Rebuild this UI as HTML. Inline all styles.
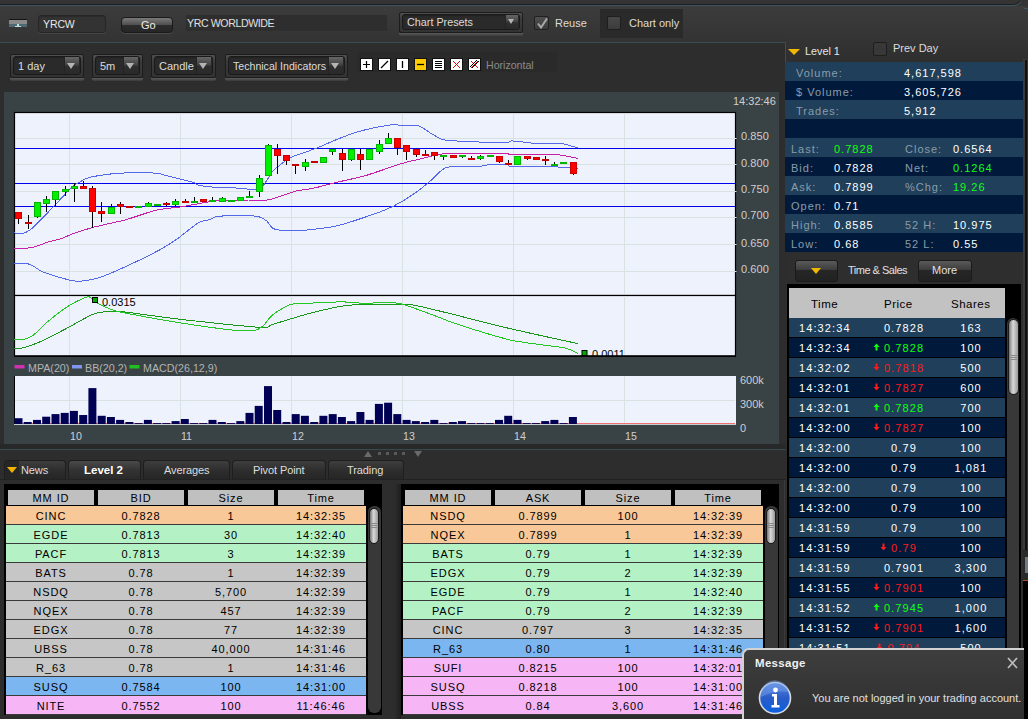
<!DOCTYPE html><html><head><meta charset="utf-8"><style>
*{margin:0;padding:0;box-sizing:border-box}
html,body{width:1028px;height:719px;overflow:hidden;background:#2d2d2d;font-family:"Liberation Sans",sans-serif;font-size:11px;color:#ddd}
.a{position:absolute}
.t{position:absolute;white-space:nowrap;line-height:1}
</style></head><body>
<div class="a" style="left:0;top:0;width:1028px;height:6px;background:#343434"></div>
<div class="a" style="left:0;top:6px;width:786px;height:36px;background:linear-gradient(#3c3c3c,#333333)"></div>
<div class="a" style="left:786px;top:6px;width:242px;height:56px;background:linear-gradient(#3c3c3c,#343434 60%,#2e2e2e)"></div>
<svg class="a" style="left:0;top:0" width="1028" height="12"><path d="M0 4.5H1013Q1017 4.5 1020 1" fill="none" stroke="#1e1e1e" stroke-width="1"/><path d="M0 5.5H1014Q1018 5.5 1021 2" fill="none" stroke="#3d5560" stroke-width="1"/><path d="M1024 8.5H1028" stroke="#3d5560" stroke-width="1"/></svg>
<div class="a" style="left:0;top:42px;width:786px;height:1px;background:#3a4c55"></div>
<div class="a" style="left:785px;top:42px;width:1px;height:20px;background:#3a4c55"></div>
<div class="a" style="left:9px;top:19px;width:18px;height:1px;background:#151515"></div>
<div class="a" style="left:9px;top:20px;width:18px;height:4px;background:#8a8a8a"></div>
<div class="a" style="left:9px;top:24px;width:18px;height:3px;background:#4d6870"></div>
<div class="a" style="left:17px;top:24px;width:2px;height:3px;background:#bfe0e0"></div>
<div class="a" style="left:15px;top:26px;width:6px;height:1px;background:#bfe0e0"></div>
<div class="a" style="left:38px;top:15px;width:68px;height:18px;background:#333;border:1px solid #262626;border-radius:3px;box-shadow:inset 0 1px 0 #2a2a2a, 0 1px 0 #444"></div>
<div class="t" style="left:43px;top:19px;font-size:10.5px;color:#e8e8e8;letter-spacing:-0.1px">YRCW</div>
<div class="a" style="left:121px;top:17px;width:52px;height:16px;border-radius:4px;background:linear-gradient(#7a7a7a,#4e4e4e 50%,#2c2c2c 52%,#262626);border:1px solid #1a1a1a;box-shadow:0 1px 0 #4a4a4a"></div>
<div class="t" style="left:141px;top:20px;font-size:11px;color:#eee">Go</div>
<div class="a" style="left:186px;top:15px;width:201px;height:16px;background:#2e2e2e"></div>
<div class="t" style="left:187px;top:18px;font-size:10.6px;letter-spacing:-0.4px;color:#e0e0e0">YRC WORLDWIDE</div>
<div class="a" style="left:399px;top:33px;width:124px;height:3px;background:linear-gradient(#5c5c5c,#3a3a3a);border-radius:0 0 2px 2px"></div><div class="a" style="left:399px;top:12px;width:124px;height:21px;border-radius:2px;background:linear-gradient(#505050,#3c3c3c 30%,#333);border:1px solid #1c1c1c"></div><div class="a" style="left:402px;top:14px;width:118px;height:16px;background:#2a2a2a;border-radius:3px;border:1px solid #1a1a1a;box-shadow:inset 0 1px 1px #222"></div><div class="a" style="left:505px;top:15px;width:13px;height:14px;background:linear-gradient(#666,#444 45%,#2e2e2e 55%,#2a2a2a);border-left:1px solid #242424"></div><div class="a" style="left:508px;top:19px;width:0;height:0;border-left:3px solid transparent;border-right:3px solid transparent;border-top:5px solid #b4b4b4"></div><div class="t" style="left:407px;top:17px;font-size:10.8px;color:#dcdcdc">Chart Presets</div>
<div class="a" style="left:534px;top:16px;width:15px;height:14px;border:1px solid #202020;border-radius:2px;background:linear-gradient(#505050,#3a3a3a)"></div>
<svg class="a" style="left:534px;top:15px" width="16" height="16"><path d="M4 8.5l3 4 6-9" fill="none" stroke="#a8a8a8" stroke-width="2"/></svg>
<div class="t" style="left:555px;top:18px;font-size:11px;color:#dcdcdc">Reuse</div>
<div class="a" style="left:600px;top:9px;width:83px;height:29px;background:#2a2a2a"></div>
<div class="a" style="left:607px;top:16px;width:14px;height:14px;border:1px solid #1e1e1e;border-radius:2px;background:linear-gradient(#484848,#3c3c3c)"></div>
<div class="t" style="left:629px;top:18px;font-size:11px;color:#dcdcdc">Chart only</div>
<div class="a" style="left:10px;top:78px;width:74px;height:3px;background:linear-gradient(#5c5c5c,#3a3a3a);border-radius:0 0 2px 2px"></div><div class="a" style="left:10px;top:54px;width:74px;height:24px;border-radius:2px;background:linear-gradient(#505050,#3c3c3c 30%,#333);border:1px solid #1c1c1c"></div><div class="a" style="left:13px;top:56px;width:68px;height:19px;background:#2a2a2a;border-radius:3px;border:1px solid #1a1a1a;box-shadow:inset 0 1px 1px #222"></div><div class="a" style="left:64px;top:57px;width:15px;height:17px;background:linear-gradient(#666,#444 45%,#2e2e2e 55%,#2a2a2a);border-left:1px solid #242424"></div><div class="a" style="left:67px;top:63px;width:0;height:0;border-left:4px solid transparent;border-right:4px solid transparent;border-top:6px solid #b4b4b4"></div><div class="t" style="left:18px;top:61px;font-size:11px;color:#dcdcdc">1 day</div>
<div class="a" style="left:92px;top:78px;width:51px;height:3px;background:linear-gradient(#5c5c5c,#3a3a3a);border-radius:0 0 2px 2px"></div><div class="a" style="left:92px;top:54px;width:51px;height:24px;border-radius:2px;background:linear-gradient(#505050,#3c3c3c 30%,#333);border:1px solid #1c1c1c"></div><div class="a" style="left:95px;top:56px;width:45px;height:19px;background:#2a2a2a;border-radius:3px;border:1px solid #1a1a1a;box-shadow:inset 0 1px 1px #222"></div><div class="a" style="left:123px;top:57px;width:15px;height:17px;background:linear-gradient(#666,#444 45%,#2e2e2e 55%,#2a2a2a);border-left:1px solid #242424"></div><div class="a" style="left:126px;top:63px;width:0;height:0;border-left:4px solid transparent;border-right:4px solid transparent;border-top:6px solid #b4b4b4"></div><div class="t" style="left:100px;top:61px;font-size:11px;color:#dcdcdc">5m</div>
<div class="a" style="left:151px;top:78px;width:65px;height:3px;background:linear-gradient(#5c5c5c,#3a3a3a);border-radius:0 0 2px 2px"></div><div class="a" style="left:151px;top:54px;width:65px;height:24px;border-radius:2px;background:linear-gradient(#505050,#3c3c3c 30%,#333);border:1px solid #1c1c1c"></div><div class="a" style="left:154px;top:56px;width:59px;height:19px;background:#2a2a2a;border-radius:3px;border:1px solid #1a1a1a;box-shadow:inset 0 1px 1px #222"></div><div class="a" style="left:196px;top:57px;width:15px;height:17px;background:linear-gradient(#666,#444 45%,#2e2e2e 55%,#2a2a2a);border-left:1px solid #242424"></div><div class="a" style="left:199px;top:63px;width:0;height:0;border-left:4px solid transparent;border-right:4px solid transparent;border-top:6px solid #b4b4b4"></div><div class="t" style="left:159px;top:61px;font-size:11px;color:#dcdcdc">Candle</div>
<div class="a" style="left:225px;top:78px;width:123px;height:3px;background:linear-gradient(#5c5c5c,#3a3a3a);border-radius:0 0 2px 2px"></div><div class="a" style="left:225px;top:54px;width:123px;height:24px;border-radius:2px;background:linear-gradient(#505050,#3c3c3c 30%,#333);border:1px solid #1c1c1c"></div><div class="a" style="left:228px;top:56px;width:117px;height:19px;background:#2a2a2a;border-radius:3px;border:1px solid #1a1a1a;box-shadow:inset 0 1px 1px #222"></div><div class="a" style="left:328px;top:57px;width:15px;height:17px;background:linear-gradient(#666,#444 45%,#2e2e2e 55%,#2a2a2a);border-left:1px solid #242424"></div><div class="a" style="left:331px;top:63px;width:0;height:0;border-left:4px solid transparent;border-right:4px solid transparent;border-top:6px solid #b4b4b4"></div><div class="t" style="left:233px;top:61px;font-size:10.6px;color:#dcdcdc">Technical Indicators</div>
<div class="a" style="left:357px;top:52px;width:200px;height:20px;background:#2a2a2a"></div>
<div class="a" style="left:360px;top:58px;width:13px;height:13px;background:#ffffff;border:1px solid #111"></div>
<div class="a" style="left:378px;top:58px;width:13px;height:13px;background:#ffffff;border:1px solid #111"></div>
<div class="a" style="left:396px;top:58px;width:13px;height:13px;background:#ffffff;border:1px solid #111"></div>
<div class="a" style="left:414px;top:58px;width:13px;height:13px;background:#ffcc00;border:1px solid #111"></div>
<div class="a" style="left:432px;top:58px;width:13px;height:13px;background:#ffffff;border:1px solid #111"></div>
<div class="a" style="left:450px;top:58px;width:13px;height:13px;background:#ffffff;border:1px solid #111"></div>
<div class="a" style="left:468px;top:58px;width:13px;height:13px;background:#ffffff;border:1px solid #111"></div>
<svg class="a" style="left:0;top:0" width="1028" height="100"><path d="M363 64.5h7M366.5 61v7" stroke="#000" stroke-width="1.2"/><path d="M381 68l7-7" stroke="#000" stroke-width="1.2"/><path d="M402.5 61v7" stroke="#000" stroke-width="1.3"/><path d="M417 64.5h7" stroke="#000" stroke-width="1.3"/><path d="M435 61.5h7M435 63.5h7M435 65.5h7M435 67.5h7" stroke="#000" stroke-width="1"/><path d="M453 61l7 7M460 61l-7 7" stroke="#e00" stroke-width="1"/><path d="M471 61l7 7M478 61l-7 7" stroke="#e00" stroke-width="1"/><path d="M470 67l7-7M472 68l7-7" stroke="#000" stroke-width="1"/></svg>
<div class="t" style="left:486px;top:60px;font-size:10.6px;color:#8a8a8a">Horizontal</div>
<div class="a" style="left:4px;top:81px;width:775px;height:11px;background:#2d2d2d"></div>
<div class="a" style="left:4px;top:92px;width:775px;height:352px;background:#394245"></div>
<svg class="a" style="left:0;top:0" width="1028" height="460" shape-rendering="auto"><rect x="14.5" y="112.5" width="721" height="183" fill="#eef2fc" stroke="#000" stroke-width="1.2"/><line x1="15" y1="138.5" x2="735" y2="138.5" stroke="#d8e2e2" stroke-width="1"/><line x1="15" y1="164.5" x2="735" y2="164.5" stroke="#d8e2e2" stroke-width="1"/><line x1="15" y1="191.5" x2="735" y2="191.5" stroke="#d8e2e2" stroke-width="1"/><line x1="15" y1="217.5" x2="735" y2="217.5" stroke="#d8e2e2" stroke-width="1"/><line x1="15" y1="244.5" x2="735" y2="244.5" stroke="#d8e2e2" stroke-width="1"/><line x1="15" y1="271.5" x2="735" y2="271.5" stroke="#d8e2e2" stroke-width="1"/><line x1="69.5" y1="113" x2="69.5" y2="295" stroke="#d8e2e2" stroke-width="1"/><line x1="180.5" y1="113" x2="180.5" y2="295" stroke="#d8e2e2" stroke-width="1"/><line x1="291.5" y1="113" x2="291.5" y2="295" stroke="#d8e2e2" stroke-width="1"/><line x1="402.5" y1="113" x2="402.5" y2="295" stroke="#d8e2e2" stroke-width="1"/><line x1="513.5" y1="113" x2="513.5" y2="295" stroke="#d8e2e2" stroke-width="1"/><line x1="624.5" y1="113" x2="624.5" y2="295" stroke="#d8e2e2" stroke-width="1"/><line x1="735" y1="138.5" x2="736.5" y2="138.5" stroke="#e0e8e8" stroke-width="1"/><line x1="735" y1="164.5" x2="736.5" y2="164.5" stroke="#e0e8e8" stroke-width="1"/><line x1="735" y1="191.5" x2="736.5" y2="191.5" stroke="#e0e8e8" stroke-width="1"/><line x1="735" y1="217.5" x2="736.5" y2="217.5" stroke="#e0e8e8" stroke-width="1"/><line x1="735" y1="244.5" x2="736.5" y2="244.5" stroke="#e0e8e8" stroke-width="1"/><line x1="735" y1="271.5" x2="736.5" y2="271.5" stroke="#e0e8e8" stroke-width="1"/><line x1="15" y1="148.5" x2="735" y2="148.5" stroke="#0000f0" stroke-width="1.2"/><line x1="15" y1="183.5" x2="735" y2="183.5" stroke="#0000f0" stroke-width="1.2"/><line x1="15" y1="206.5" x2="735" y2="206.5" stroke="#0000f0" stroke-width="1.2"/><path d="M14.4,232.9 C15.4,233.0 21.1,233.9 23.1,233.4 C25.1,232.9 29.5,230.5 31.9,228.6 C34.3,226.7 40.5,220.1 43.6,216.9 C46.7,213.8 55.0,205.0 58.2,201.6 C61.4,198.2 68.9,189.9 71.3,187.7 C73.7,185.5 76.7,183.7 78.6,182.6 C80.5,181.5 85.1,179.0 87.3,178.2 C89.5,177.4 93.7,176.4 97.6,175.8 C101.5,175.2 114.1,173.4 120.9,173.1 C127.7,172.8 150.8,172.9 155.9,173.1 C161.0,173.3 161.9,174.5 164.6,175.2 C167.3,175.9 175.8,178.0 179.2,178.9 C182.6,179.8 191.6,181.8 193.8,182.5 C196.0,183.2 195.6,184.6 198.2,185.2 C200.8,185.8 211.1,187.0 215.7,187.3 C220.3,187.6 233.1,187.8 237.6,188.1 C242.1,188.4 251.6,189.7 254.5,189.5 C257.4,189.3 260.8,187.7 262.2,186.7 C263.6,185.7 265.5,182.3 266.7,180.6 C267.9,178.8 271.0,173.3 272.3,171.7 C273.6,170.1 275.7,168.3 277.8,166.7 C279.9,165.1 286.6,159.6 290.0,157.8 C293.4,156.1 303.4,152.9 306.7,151.7 C310.0,150.5 314.4,149.0 317.9,147.6 C321.4,146.2 332.1,141.4 336.8,139.5 C341.5,137.6 351.9,133.4 358.0,131.7 C364.1,130.0 384.1,125.9 389.0,125.1 C393.9,124.3 396.5,125.0 400.0,125.1 C403.5,125.2 415.4,125.0 418.9,125.9 C422.4,126.8 427.6,131.4 430.0,132.8 C432.4,134.2 437.5,137.3 439.3,138.2 C441.1,139.1 440.7,139.6 445.6,140.1 C450.5,140.6 474.1,141.9 481.4,142.1 C488.7,142.3 504.4,142.2 507.8,142.1 C511.2,142.0 509.8,141.1 510.9,141.0 C512.0,140.9 514.3,141.0 517.2,141.3 C520.1,141.6 530.7,143.2 535.8,143.4 C540.9,143.6 555.8,142.9 560.7,143.4 C565.6,143.9 575.9,147.5 577.9,148.0" fill="none" stroke="#5468ea" stroke-width="1" shape-rendering="crispEdges"/><path d="M14.3,263.2 C15.6,263.2 23.4,262.9 25.6,263.2 C27.8,263.5 31.3,265.1 33.3,266.1 C35.3,267.1 39.0,270.4 43.1,272.0 C47.2,273.6 64.3,278.7 68.4,279.8 C72.5,280.9 75.8,281.3 78.1,281.3 C80.4,281.3 85.2,280.6 87.8,280.2 C90.4,279.8 95.5,279.1 100.0,277.5 C104.5,275.9 119.7,269.3 126.7,266.1 C133.7,262.9 154.1,252.9 160.0,249.7 C165.9,246.5 172.8,242.1 177.3,238.9 C181.8,235.7 194.9,224.6 198.7,222.4 C202.5,220.2 208.0,220.4 210.0,219.7 C212.0,219.0 212.5,217.3 215.7,216.8 C218.9,216.3 232.7,215.4 237.6,215.4 C242.5,215.4 254.6,215.9 258.0,216.5 C261.4,217.1 265.0,219.5 266.7,220.9 C268.4,222.3 270.9,227.0 272.6,228.1 C274.3,229.2 277.6,230.0 281.3,230.2 C285.0,230.4 297.9,230.8 304.7,230.2 C311.5,229.6 330.5,227.5 339.7,225.2 C348.9,222.9 375.9,213.5 383.4,210.6 C390.9,207.7 398.8,203.5 403.9,200.4 C409.0,197.3 422.4,187.6 426.7,184.2 C431.0,180.8 438.3,172.9 440.9,170.9 C443.5,168.9 444.3,167.5 448.7,167.0 C453.1,166.5 473.3,167.0 478.2,166.7 C483.1,166.4 487.2,164.4 490.7,164.2 C494.2,164.0 505.4,164.5 507.8,164.7 C510.2,164.9 505.6,166.0 511.0,166.2 C516.4,166.4 548.9,166.6 554.5,166.7 C560.1,166.8 556.5,167.1 559.2,167.3 C561.9,167.5 575.7,168.4 577.9,168.6" fill="none" stroke="#5468ea" stroke-width="1" shape-rendering="crispEdges"/><path d="M14.3,248.2 C16.3,248.1 27.4,248.4 31.4,247.7 C35.4,247.0 45.5,242.8 48.9,241.8 C52.3,240.8 57.9,239.8 60.6,238.9 C63.3,238.0 68.4,235.4 72.3,234.0 C76.2,232.6 87.4,228.9 93.7,227.2 C100.0,225.5 119.5,221.5 126.7,219.5 C133.9,217.5 149.2,211.8 155.6,210.3 C162.0,208.8 173.9,207.9 181.2,206.8 C188.5,205.7 210.0,201.3 217.9,200.6 C225.8,199.9 242.9,201.1 249.0,201.0 C255.1,200.9 264.6,200.6 270.0,199.5 C275.4,198.4 290.7,192.5 295.6,191.2 C300.5,189.9 307.1,189.6 311.9,188.6 C316.7,187.6 330.5,183.8 336.8,182.3 C343.1,180.8 358.4,177.7 365.9,175.5 C373.4,173.3 394.4,165.8 400.9,163.8 C407.4,161.8 416.1,159.9 421.3,158.7 C426.5,157.5 437.7,154.1 445.6,153.5 C453.5,152.9 481.8,153.3 489.1,153.3 C496.4,153.3 505.2,153.2 507.8,153.3 C510.4,153.4 505.6,154.2 511.0,154.3 C516.4,154.4 546.7,153.8 554.5,154.3 C562.3,154.8 575.2,158.0 577.9,158.5" fill="none" stroke="#c81ea8" stroke-width="1" shape-rendering="crispEdges"/><g shape-rendering="crispEdges"><rect x="18" y="212" width="1" height="12" fill="#000"/><rect x="15" y="212" width="7" height="7" fill="#c80000"/><rect x="16" y="213" width="5" height="5" fill="#ff0000"/><rect x="28" y="215" width="1" height="14" fill="#000"/><rect x="25" y="222" width="7" height="2" fill="#c80000"/><rect x="37" y="202" width="1" height="16" fill="#000"/><rect x="34" y="202" width="7" height="15" fill="#00b400"/><rect x="35" y="203" width="5" height="13" fill="#00f000"/><rect x="46" y="196" width="1" height="16" fill="#000"/><rect x="43" y="199" width="7" height="5" fill="#00b400"/><rect x="44" y="200" width="5" height="3" fill="#00f000"/><rect x="55" y="191" width="1" height="15" fill="#000"/><rect x="52" y="191" width="7" height="9" fill="#00b400"/><rect x="53" y="192" width="5" height="7" fill="#00f000"/><rect x="65" y="186" width="1" height="10" fill="#000"/><rect x="62" y="189" width="7" height="3" fill="#00b400"/><rect x="63" y="190" width="5" height="1" fill="#00f000"/><rect x="74" y="183" width="1" height="19" fill="#000"/><rect x="71" y="186" width="7" height="3" fill="#00b400"/><rect x="72" y="187" width="5" height="1" fill="#00f000"/><rect x="83" y="181" width="1" height="8" fill="#000"/><rect x="80" y="186" width="7" height="3" fill="#c80000"/><rect x="81" y="187" width="5" height="1" fill="#ff0000"/><rect x="92" y="186" width="1" height="42" fill="#000"/><rect x="89" y="188" width="7" height="24" fill="#c80000"/><rect x="90" y="189" width="5" height="22" fill="#ff0000"/><rect x="101" y="202" width="1" height="20" fill="#000"/><rect x="98" y="211" width="7" height="3" fill="#c80000"/><rect x="99" y="212" width="5" height="1" fill="#ff0000"/><rect x="111" y="204" width="1" height="10" fill="#000"/><rect x="108" y="207" width="7" height="7" fill="#00b400"/><rect x="109" y="208" width="5" height="5" fill="#00f000"/><rect x="120" y="202" width="1" height="12" fill="#000"/><rect x="117" y="204" width="7" height="3" fill="#c80000"/><rect x="118" y="205" width="5" height="1" fill="#ff0000"/><rect x="129" y="206" width="1" height="2" fill="#000"/><rect x="126" y="206" width="7" height="2" fill="#c80000"/><rect x="138" y="206" width="1" height="2" fill="#000"/><rect x="135" y="206" width="7" height="2" fill="#00b400"/><rect x="148" y="202" width="1" height="5" fill="#000"/><rect x="145" y="203" width="7" height="4" fill="#00b400"/><rect x="146" y="204" width="5" height="2" fill="#00f000"/><rect x="157" y="204" width="1" height="2" fill="#000"/><rect x="154" y="204" width="7" height="2" fill="#00b400"/><rect x="166" y="202" width="1" height="4" fill="#000"/><rect x="163" y="203" width="7" height="2" fill="#c80000"/><rect x="175" y="199" width="1" height="7" fill="#000"/><rect x="172" y="201" width="7" height="4" fill="#00b400"/><rect x="173" y="202" width="5" height="2" fill="#00f000"/><rect x="185" y="199" width="1" height="4" fill="#000"/><rect x="182" y="201" width="7" height="2" fill="#c80000"/><rect x="194" y="197" width="1" height="6" fill="#000"/><rect x="191" y="201" width="7" height="2" fill="#00b400"/><rect x="203" y="199" width="1" height="3" fill="#000"/><rect x="200" y="199" width="7" height="3" fill="#c80000"/><rect x="201" y="200" width="5" height="1" fill="#ff0000"/><rect x="212" y="197" width="1" height="5" fill="#000"/><rect x="209" y="200" width="7" height="2" fill="#00b400"/><rect x="222" y="197" width="1" height="5" fill="#000"/><rect x="219" y="198" width="7" height="4" fill="#00b400"/><rect x="220" y="199" width="5" height="2" fill="#00f000"/><rect x="231" y="200" width="1" height="1" fill="#000"/><rect x="228" y="200" width="7" height="2" fill="#00b400"/><rect x="240" y="197" width="1" height="4" fill="#000"/><rect x="237" y="197" width="7" height="4" fill="#00b400"/><rect x="238" y="198" width="5" height="2" fill="#00f000"/><rect x="249" y="191" width="1" height="7" fill="#000"/><rect x="246" y="196" width="7" height="2" fill="#00b400"/><rect x="259" y="175" width="1" height="22" fill="#000"/><rect x="256" y="178" width="7" height="14" fill="#00b400"/><rect x="257" y="179" width="5" height="12" fill="#00f000"/><rect x="268" y="144" width="1" height="32" fill="#000"/><rect x="265" y="145" width="7" height="31" fill="#00b400"/><rect x="266" y="146" width="5" height="29" fill="#00f000"/><rect x="277" y="144" width="1" height="30" fill="#000"/><rect x="274" y="149" width="7" height="7" fill="#c80000"/><rect x="275" y="150" width="5" height="5" fill="#ff0000"/><rect x="286" y="155" width="1" height="10" fill="#000"/><rect x="283" y="155" width="7" height="6" fill="#c80000"/><rect x="284" y="156" width="5" height="4" fill="#ff0000"/><rect x="295" y="164" width="1" height="10" fill="#000"/><rect x="292" y="164" width="7" height="2" fill="#c80000"/><rect x="305" y="159" width="1" height="12" fill="#000"/><rect x="302" y="162" width="7" height="5" fill="#00b400"/><rect x="303" y="163" width="5" height="3" fill="#00f000"/><rect x="314" y="161" width="1" height="2" fill="#000"/><rect x="311" y="161" width="7" height="2" fill="#c80000"/><rect x="323" y="157" width="1" height="6" fill="#000"/><rect x="320" y="157" width="7" height="6" fill="#00b400"/><rect x="321" y="158" width="5" height="4" fill="#00f000"/><rect x="332" y="149" width="1" height="6" fill="#000"/><rect x="329" y="149" width="7" height="3" fill="#00b400"/><rect x="330" y="150" width="5" height="1" fill="#00f000"/><rect x="342" y="149" width="1" height="22" fill="#000"/><rect x="339" y="153" width="7" height="7" fill="#c80000"/><rect x="340" y="154" width="5" height="5" fill="#ff0000"/><rect x="351" y="149" width="1" height="12" fill="#000"/><rect x="348" y="149" width="7" height="11" fill="#00b400"/><rect x="349" y="150" width="5" height="9" fill="#00f000"/><rect x="360" y="149" width="1" height="21" fill="#000"/><rect x="357" y="154" width="7" height="6" fill="#c80000"/><rect x="358" y="155" width="5" height="4" fill="#ff0000"/><rect x="369" y="149" width="1" height="11" fill="#000"/><rect x="366" y="149" width="7" height="11" fill="#00b400"/><rect x="367" y="150" width="5" height="9" fill="#00f000"/><rect x="379" y="140" width="1" height="14" fill="#000"/><rect x="376" y="144" width="7" height="8" fill="#00b400"/><rect x="377" y="145" width="5" height="6" fill="#00f000"/><rect x="388" y="133" width="1" height="11" fill="#000"/><rect x="385" y="138" width="7" height="6" fill="#00b400"/><rect x="386" y="139" width="5" height="4" fill="#00f000"/><rect x="397" y="138" width="1" height="17" fill="#000"/><rect x="394" y="138" width="7" height="10" fill="#c80000"/><rect x="395" y="139" width="5" height="8" fill="#ff0000"/><rect x="406" y="145" width="1" height="15" fill="#000"/><rect x="403" y="145" width="7" height="7" fill="#c80000"/><rect x="404" y="146" width="5" height="5" fill="#ff0000"/><rect x="416" y="149" width="1" height="8" fill="#000"/><rect x="413" y="149" width="7" height="6" fill="#c80000"/><rect x="414" y="150" width="5" height="4" fill="#ff0000"/><rect x="425" y="150" width="1" height="5" fill="#000"/><rect x="422" y="154" width="7" height="2" fill="#c80000"/><rect x="434" y="152" width="1" height="8" fill="#000"/><rect x="431" y="152" width="7" height="4" fill="#c80000"/><rect x="432" y="153" width="5" height="2" fill="#ff0000"/><rect x="443" y="155" width="1" height="5" fill="#000"/><rect x="440" y="155" width="7" height="2" fill="#00b400"/><rect x="453" y="155" width="1" height="3" fill="#000"/><rect x="450" y="155" width="7" height="3" fill="#c80000"/><rect x="451" y="156" width="5" height="1" fill="#ff0000"/><rect x="462" y="155" width="1" height="3" fill="#000"/><rect x="459" y="155" width="7" height="2" fill="#00b400"/><rect x="471" y="156" width="1" height="3" fill="#000"/><rect x="468" y="158" width="7" height="2" fill="#c80000"/><rect x="480" y="155" width="1" height="5" fill="#000"/><rect x="477" y="156" width="7" height="3" fill="#00b400"/><rect x="478" y="157" width="5" height="1" fill="#00f000"/><rect x="490" y="155" width="1" height="2" fill="#000"/><rect x="487" y="155" width="7" height="2" fill="#00b400"/><rect x="499" y="156" width="1" height="7" fill="#000"/><rect x="496" y="156" width="7" height="6" fill="#c80000"/><rect x="497" y="157" width="5" height="4" fill="#ff0000"/><rect x="508" y="160" width="1" height="5" fill="#000"/><rect x="505" y="163" width="7" height="2" fill="#c80000"/><rect x="517" y="156" width="1" height="9" fill="#000"/><rect x="514" y="156" width="7" height="9" fill="#00b400"/><rect x="515" y="157" width="5" height="7" fill="#00f000"/><rect x="527" y="156" width="1" height="4" fill="#000"/><rect x="524" y="156" width="7" height="3" fill="#c80000"/><rect x="525" y="157" width="5" height="1" fill="#ff0000"/><rect x="536" y="157" width="1" height="3" fill="#000"/><rect x="533" y="157" width="7" height="3" fill="#c80000"/><rect x="534" y="158" width="5" height="1" fill="#ff0000"/><rect x="545" y="156" width="1" height="9" fill="#000"/><rect x="542" y="159" width="7" height="2" fill="#c80000"/><rect x="554" y="162" width="1" height="3" fill="#000"/><rect x="551" y="164" width="7" height="2" fill="#00b400"/><rect x="563" y="162" width="1" height="1" fill="#000"/><rect x="560" y="162" width="7" height="2" fill="#00b400"/><rect x="573" y="162" width="1" height="13" fill="#000"/><rect x="570" y="162" width="7" height="12" fill="#c80000"/><rect x="571" y="163" width="5" height="10" fill="#ff0000"/></g><rect x="14.5" y="295.5" width="721" height="60.5" fill="#eef2fc" stroke="#000" stroke-width="1.2"/><line x1="69.5" y1="296" x2="69.5" y2="355" stroke="#d8e2e2" stroke-width="1"/><line x1="180.5" y1="296" x2="180.5" y2="355" stroke="#d8e2e2" stroke-width="1"/><line x1="291.5" y1="296" x2="291.5" y2="355" stroke="#d8e2e2" stroke-width="1"/><line x1="402.5" y1="296" x2="402.5" y2="355" stroke="#d8e2e2" stroke-width="1"/><line x1="513.5" y1="296" x2="513.5" y2="355" stroke="#d8e2e2" stroke-width="1"/><line x1="624.5" y1="296" x2="624.5" y2="355" stroke="#d8e2e2" stroke-width="1"/><path d="M14.4,348.4 C15.4,348.3 19.5,348.8 23.1,347.8 C26.7,346.8 39.7,342.0 45.0,339.6 C50.3,337.2 63.0,330.3 68.4,327.4 C73.8,324.5 87.6,316.6 91.7,314.8 C95.8,313.0 99.7,312.2 103.4,311.9 C107.1,311.6 115.0,311.0 123.8,311.9 C132.6,312.8 163.2,317.4 179.2,319.2 C195.2,321.0 250.1,326.8 261.0,327.4 C271.9,328.0 266.9,326.0 272.6,324.4 C278.3,322.8 301.4,315.5 310.0,313.3 C318.6,311.1 337.8,306.6 346.3,305.5 C354.8,304.4 375.0,304.3 382.7,304.2 C390.4,304.1 405.1,303.9 412.4,304.9 C419.7,305.9 433.9,309.7 445.5,312.5 C457.1,315.3 496.2,325.4 511.6,329.0 C527.0,332.6 570.1,341.9 577.8,343.6" fill="none" stroke="#189818" stroke-width="1" shape-rendering="crispEdges"/><path d="M14.4,339.6 C15.4,339.6 20.9,340.1 23.1,339.6 C25.3,339.1 30.4,337.3 33.3,335.2 C36.2,333.1 43.8,324.9 47.9,321.5 C52.0,318.1 64.0,308.8 68.4,306.0 C72.8,303.2 83.4,298.3 85.9,297.3 C88.4,296.3 88.8,296.6 90.2,297.3 C91.6,298.0 94.9,301.6 97.5,303.1 C100.1,304.6 108.7,308.6 112.1,309.8 C115.5,311.0 118.9,311.8 126.7,313.3 C134.5,314.8 166.6,320.7 179.2,322.7 C191.8,324.7 225.8,329.4 234.7,330.3 C243.6,331.2 251.7,330.9 255.1,330.3 C258.5,329.7 261.9,326.8 263.9,325.0 C265.9,323.2 269.5,317.2 272.6,314.8 C275.7,312.4 285.7,306.0 290.1,304.6 C294.5,303.2 305.0,303.3 310.0,303.1 C315.0,302.9 329.5,302.8 333.0,302.6 C336.5,302.4 336.2,301.5 339.7,301.6 C343.2,301.7 357.0,303.1 362.8,303.2 C368.6,303.3 384.7,302.5 389.3,302.6 C393.9,302.7 397.5,302.8 402.5,304.2 C407.5,305.6 425.7,312.4 432.3,314.8 C438.9,317.2 449.4,321.7 458.7,324.7 C468.0,327.7 499.2,337.6 511.6,340.3 C524.0,343.0 556.9,346.4 564.6,347.9 C572.3,349.4 576.3,352.8 577.8,353.5" fill="none" stroke="#22c822" stroke-width="1" shape-rendering="crispEdges"/><rect x="92.5" y="297.5" width="5" height="5" fill="#0a0" stroke="#000" stroke-width="1"/><rect x="582" y="350.5" width="5" height="5" fill="#0a0" stroke="#000" stroke-width="1"/><text x="102" y="305.5" font-family="Liberation Sans" font-size="11" fill="#000">0.0315</text><text x="592" y="358" font-family="Liberation Sans" font-size="11" fill="#000">0.0011</text><rect x="4" y="357" width="775" height="19" fill="#394245"/><line x1="14" y1="356.25" x2="736" y2="356.25" stroke="#000" stroke-width="1.5"/><rect x="14" y="376" width="722" height="48.5" fill="#eef2fc"/><line x1="14.5" y1="376" x2="14.5" y2="424.5" stroke="#000" stroke-width="1"/><line x1="15" y1="400.5" x2="735" y2="400.5" stroke="#d8e2e2" stroke-width="1"/><line x1="69.5" y1="376" x2="69.5" y2="424" stroke="#d8e2e2" stroke-width="1"/><line x1="180.5" y1="376" x2="180.5" y2="424" stroke="#d8e2e2" stroke-width="1"/><line x1="291.5" y1="376" x2="291.5" y2="424" stroke="#d8e2e2" stroke-width="1"/><line x1="402.5" y1="376" x2="402.5" y2="424" stroke="#d8e2e2" stroke-width="1"/><line x1="513.5" y1="376" x2="513.5" y2="424" stroke="#d8e2e2" stroke-width="1"/><line x1="624.5" y1="376" x2="624.5" y2="424" stroke="#d8e2e2" stroke-width="1"/><line x1="15" y1="423.5" x2="735" y2="423.5" stroke="#f07070" stroke-width="1.2"/><rect x="14.5" y="418.2" width="8" height="6.1" fill="#000055"/><rect x="23.7" y="422.0" width="8" height="2.3" fill="#000055"/><rect x="33.0" y="419.9" width="8" height="4.4" fill="#000055"/><rect x="42.2" y="416.7" width="8" height="7.6" fill="#000055"/><rect x="51.5" y="414.1" width="8" height="10.2" fill="#000055"/><rect x="60.7" y="412.9" width="8" height="11.4" fill="#000055"/><rect x="69.9" y="410.9" width="8" height="13.4" fill="#000055"/><rect x="79.2" y="415.0" width="8" height="9.3" fill="#000055"/><rect x="88.4" y="388.1" width="8" height="36.2" fill="#000055"/><rect x="97.7" y="415.8" width="8" height="8.5" fill="#000055"/><rect x="106.9" y="417.0" width="8" height="7.3" fill="#000055"/><rect x="116.1" y="419.9" width="8" height="4.4" fill="#000055"/><rect x="125.4" y="422.0" width="8" height="2.3" fill="#000055"/><rect x="134.6" y="423.1" width="8" height="1.2" fill="#000055"/><rect x="143.9" y="419.9" width="8" height="4.4" fill="#000055"/><rect x="153.1" y="423.1" width="8" height="1.2" fill="#000055"/><rect x="162.3" y="423.1" width="8" height="1.2" fill="#000055"/><rect x="171.6" y="421.1" width="8" height="3.2" fill="#000055"/><rect x="180.8" y="419.0" width="8" height="5.3" fill="#000055"/><rect x="190.1" y="423.1" width="8" height="1.2" fill="#000055"/><rect x="199.3" y="423.1" width="8" height="1.2" fill="#000055"/><rect x="208.5" y="419.9" width="8" height="4.4" fill="#000055"/><rect x="217.8" y="422.0" width="8" height="2.3" fill="#000055"/><rect x="227.0" y="423.1" width="8" height="1.2" fill="#000055"/><rect x="236.3" y="421.1" width="8" height="3.2" fill="#000055"/><rect x="245.5" y="412.9" width="8" height="11.4" fill="#000055"/><rect x="254.7" y="405.9" width="8" height="18.4" fill="#000055"/><rect x="264.0" y="386.1" width="8" height="38.2" fill="#000055"/><rect x="273.2" y="410.0" width="8" height="14.3" fill="#000055"/><rect x="282.5" y="422.0" width="8" height="2.3" fill="#000055"/><rect x="291.7" y="414.1" width="8" height="10.2" fill="#000055"/><rect x="300.9" y="415.8" width="8" height="8.5" fill="#000055"/><rect x="310.2" y="422.0" width="8" height="2.3" fill="#000055"/><rect x="319.4" y="415.8" width="8" height="8.5" fill="#000055"/><rect x="328.7" y="414.1" width="8" height="10.2" fill="#000055"/><rect x="337.9" y="417.0" width="8" height="7.3" fill="#000055"/><rect x="347.1" y="421.1" width="8" height="3.2" fill="#000055"/><rect x="356.4" y="412.0" width="8" height="12.3" fill="#000055"/><rect x="365.6" y="419.9" width="8" height="4.4" fill="#000055"/><rect x="374.9" y="403.9" width="8" height="20.4" fill="#000055"/><rect x="384.1" y="402.7" width="8" height="21.6" fill="#000055"/><rect x="393.3" y="414.1" width="8" height="10.2" fill="#000055"/><rect x="402.6" y="419.9" width="8" height="4.4" fill="#000055"/><rect x="411.8" y="421.1" width="8" height="3.2" fill="#000055"/><rect x="421.1" y="422.0" width="8" height="2.3" fill="#000055"/><rect x="430.3" y="419.9" width="8" height="4.4" fill="#000055"/><rect x="439.5" y="423.1" width="8" height="1.2" fill="#000055"/><rect x="448.8" y="422.0" width="8" height="2.3" fill="#000055"/><rect x="458.0" y="421.1" width="8" height="3.2" fill="#000055"/><rect x="467.3" y="423.1" width="8" height="1.2" fill="#000055"/><rect x="476.5" y="423.1" width="8" height="1.2" fill="#000055"/><rect x="485.7" y="423.1" width="8" height="1.2" fill="#000055"/><rect x="495.0" y="419.9" width="8" height="4.4" fill="#000055"/><rect x="504.2" y="415.8" width="8" height="8.5" fill="#000055"/><rect x="513.5" y="419.9" width="8" height="4.4" fill="#000055"/><rect x="522.7" y="423.1" width="8" height="1.2" fill="#000055"/><rect x="531.9" y="423.1" width="8" height="1.2" fill="#000055"/><rect x="541.2" y="421.1" width="8" height="3.2" fill="#000055"/><rect x="550.4" y="419.9" width="8" height="4.4" fill="#000055"/><rect x="559.7" y="423.1" width="8" height="1.2" fill="#000055"/><rect x="568.9" y="417.0" width="8" height="7.3" fill="#000055"/><line x1="14" y1="424.5" x2="736" y2="424.5" stroke="#c4d0d0" stroke-width="1"/><rect x="14.5" y="365" width="10" height="3.5" fill="#d030b0"/><rect x="72" y="365" width="10" height="3.5" fill="#7f95f0"/><rect x="129.5" y="365" width="10" height="3.5" fill="#20c020"/></svg>
<div class="t" style="left:741px;top:131px;font-size:11px;color:#cfcfcf;letter-spacing:0.1px">0.850</div>
<div class="t" style="left:741px;top:158px;font-size:11px;color:#cfcfcf;letter-spacing:0.1px">0.800</div>
<div class="t" style="left:741px;top:184px;font-size:11px;color:#cfcfcf;letter-spacing:0.1px">0.750</div>
<div class="t" style="left:741px;top:210px;font-size:11px;color:#cfcfcf;letter-spacing:0.1px">0.700</div>
<div class="t" style="left:741px;top:238px;font-size:11px;color:#cfcfcf;letter-spacing:0.1px">0.650</div>
<div class="t" style="left:741px;top:264px;font-size:11px;color:#cfcfcf;letter-spacing:0.1px">0.600</div>
<div class="t" style="left:733px;top:96px;font-size:11px;color:#cfcfcf">14:32:46</div>
<div class="t" style="left:28px;top:363px;font-size:10.7px;color:#b4b4b4">MPA(20)</div>
<div class="t" style="left:85px;top:363px;font-size:10.7px;color:#b4b4b4">BB(20,2)</div>
<div class="t" style="left:143px;top:363px;font-size:10.7px;color:#b4b4b4">MACD(26,12,9)</div>
<div class="t" style="left:740px;top:375px;font-size:11px;color:#cfcfcf">600k</div>
<div class="t" style="left:740px;top:399px;font-size:11px;color:#cfcfcf">300k</div>
<div class="t" style="left:740px;top:423px;font-size:11px;color:#cfcfcf">0</div>
<div class="t" style="left:70px;top:431px;font-size:10.6px;color:#cfcfcf">10</div>
<div class="t" style="left:181px;top:431px;font-size:10.6px;color:#cfcfcf">11</div>
<div class="t" style="left:292px;top:431px;font-size:10.6px;color:#cfcfcf">12</div>
<div class="t" style="left:403px;top:431px;font-size:10.6px;color:#cfcfcf">13</div>
<div class="t" style="left:514px;top:431px;font-size:10.6px;color:#cfcfcf">14</div>
<div class="t" style="left:625px;top:431px;font-size:10.6px;color:#cfcfcf">15</div>
<div class="a" style="left:0;top:444px;width:786px;height:5px;background:#282828"></div>
<div class="a" style="left:0;top:449px;width:786px;height:1px;background:#3a4a52"></div>
<svg class="a" style="left:0;top:440" width="1028" height="30"></svg>
<div class="a" style="left:364px;top:451px;width:0;height:0;border-left:4px solid transparent;border-right:4px solid transparent;border-bottom:6px solid #6a6a6a"></div>
<div class="a" style="left:378px;top:452px;width:3px;height:3px;background:#5a5a5a"></div>
<div class="a" style="left:386px;top:452px;width:3px;height:3px;background:#5a5a5a"></div>
<div class="a" style="left:394px;top:452px;width:3px;height:3px;background:#5a5a5a"></div>
<div class="a" style="left:402px;top:452px;width:3px;height:3px;background:#5a5a5a"></div>
<div class="a" style="left:414px;top:451px;width:0;height:0;border-left:4px solid transparent;border-right:4px solid transparent;border-top:6px solid #6a6a6a"></div>
<div class="a" style="left:4px;top:460px;width:62px;height:19px;border-radius:4px 4px 0 0;background:linear-gradient(#3e3e3e,#2e2e2e 50%,#262626);border:1px solid #1e1e1e;border-bottom:none"></div>
<div class="a" style="left:5px;top:461px;width:14px;height:18px;background:#262626"></div>
<div class="a" style="left:7px;top:467px;width:0;height:0;border-left:5px solid transparent;border-right:5px solid transparent;border-top:6px solid #f0b400"></div>
<div class="t" style="left:21px;top:465px;font-size:11px;letter-spacing:-0.1px;color:#ddd">News</div>
<div class="a" style="left:68px;top:460px;width:73px;height:19px;border-radius:4px 4px 0 0;background:linear-gradient(#4a4a4a,#333 50%,#2a2a2a);border:1px solid #1e1e1e;border-bottom:none"></div>
<div class="t" style="left:84px;top:465px;font-size:11.5px;font-weight:bold;color:#fff">Level 2</div>
<div class="a" style="left:143px;top:460px;width:87px;height:19px;border-radius:4px 4px 0 0;background:linear-gradient(#3e3e3e,#2e2e2e 50%,#262626);border:1px solid #1e1e1e;border-bottom:none"></div>
<div class="t" style="left:164px;top:465px;font-size:11px;letter-spacing:-0.1px;color:#ddd">Averages</div>
<div class="a" style="left:232px;top:460px;width:94px;height:19px;border-radius:4px 4px 0 0;background:linear-gradient(#3e3e3e,#2e2e2e 50%,#262626);border:1px solid #1e1e1e;border-bottom:none"></div>
<div class="t" style="left:253px;top:465px;font-size:11px;letter-spacing:-0.1px;color:#ddd">Pivot Point</div>
<div class="a" style="left:328px;top:460px;width:76px;height:19px;border-radius:4px 4px 0 0;background:linear-gradient(#3e3e3e,#2e2e2e 50%,#262626);border:1px solid #1e1e1e;border-bottom:none"></div>
<div class="t" style="left:347px;top:465px;font-size:11px;letter-spacing:-0.1px;color:#ddd">Trading</div>
<div class="a" style="left:0;top:479px;width:786px;height:1px;background:#222"></div>
<div class="a" style="left:4px;top:484px;width:378px;height:231px;background:#000"></div><div class="a" style="left:8px;top:490px;width:86px;height:15px;background:#c0c0c0"></div><div class="t" style="left:8px;top:493px;width:86px;font-size:11px;color:#000;letter-spacing:0.9px;text-align:center">MM ID</div><div class="a" style="left:98px;top:490px;width:86px;height:15px;background:#c0c0c0"></div><div class="t" style="left:98px;top:493px;width:86px;font-size:11px;color:#000;letter-spacing:0.9px;text-align:center">BID</div><div class="a" style="left:188px;top:490px;width:86px;height:15px;background:#c0c0c0"></div><div class="t" style="left:188px;top:493px;width:86px;font-size:11px;color:#000;letter-spacing:0.9px;text-align:center">Size</div><div class="a" style="left:278px;top:490px;width:86px;height:15px;background:#c0c0c0"></div><div class="t" style="left:278px;top:493px;width:86px;font-size:11px;color:#000;letter-spacing:0.9px;text-align:center">Time</div><div class="a" style="left:6px;top:506px;width:360px;height:18px;background:#f8c898"></div><div class="a" style="left:6px;top:524px;width:360px;height:1px;background:#3a3a3a"></div><div class="t" style="left:8px;top:511px;width:86px;font-size:11px;color:#000;letter-spacing:0.9px;text-align:center">CINC</div><div class="t" style="left:98px;top:511px;width:86px;font-size:11px;color:#000;letter-spacing:0.9px;text-align:center">0.7828</div><div class="t" style="left:188px;top:511px;width:86px;font-size:11px;color:#000;letter-spacing:0.9px;text-align:center">1</div><div class="t" style="left:278px;top:511px;width:86px;font-size:11px;color:#000;letter-spacing:0.9px;text-align:center">14:32:35</div><div class="a" style="left:6px;top:525px;width:360px;height:18px;background:#b4f2c6"></div><div class="a" style="left:6px;top:543px;width:360px;height:1px;background:#3a3a3a"></div><div class="t" style="left:8px;top:530px;width:86px;font-size:11px;color:#000;letter-spacing:0.9px;text-align:center">EGDE</div><div class="t" style="left:98px;top:530px;width:86px;font-size:11px;color:#000;letter-spacing:0.9px;text-align:center">0.7813</div><div class="t" style="left:188px;top:530px;width:86px;font-size:11px;color:#000;letter-spacing:0.9px;text-align:center">30</div><div class="t" style="left:278px;top:530px;width:86px;font-size:11px;color:#000;letter-spacing:0.9px;text-align:center">14:32:40</div><div class="a" style="left:6px;top:544px;width:360px;height:18px;background:#b4f2c6"></div><div class="a" style="left:6px;top:562px;width:360px;height:1px;background:#3a3a3a"></div><div class="t" style="left:8px;top:549px;width:86px;font-size:11px;color:#000;letter-spacing:0.9px;text-align:center">PACF</div><div class="t" style="left:98px;top:549px;width:86px;font-size:11px;color:#000;letter-spacing:0.9px;text-align:center">0.7813</div><div class="t" style="left:188px;top:549px;width:86px;font-size:11px;color:#000;letter-spacing:0.9px;text-align:center">3</div><div class="t" style="left:278px;top:549px;width:86px;font-size:11px;color:#000;letter-spacing:0.9px;text-align:center">14:32:39</div><div class="a" style="left:6px;top:563px;width:360px;height:18px;background:#c6c6c6"></div><div class="a" style="left:6px;top:581px;width:360px;height:1px;background:#3a3a3a"></div><div class="t" style="left:8px;top:568px;width:86px;font-size:11px;color:#000;letter-spacing:0.9px;text-align:center">BATS</div><div class="t" style="left:98px;top:568px;width:86px;font-size:11px;color:#000;letter-spacing:0.9px;text-align:center">0.78</div><div class="t" style="left:188px;top:568px;width:86px;font-size:11px;color:#000;letter-spacing:0.9px;text-align:center">1</div><div class="t" style="left:278px;top:568px;width:86px;font-size:11px;color:#000;letter-spacing:0.9px;text-align:center">14:32:39</div><div class="a" style="left:6px;top:582px;width:360px;height:18px;background:#c6c6c6"></div><div class="a" style="left:6px;top:600px;width:360px;height:1px;background:#3a3a3a"></div><div class="t" style="left:8px;top:587px;width:86px;font-size:11px;color:#000;letter-spacing:0.9px;text-align:center">NSDQ</div><div class="t" style="left:98px;top:587px;width:86px;font-size:11px;color:#000;letter-spacing:0.9px;text-align:center">0.78</div><div class="t" style="left:188px;top:587px;width:86px;font-size:11px;color:#000;letter-spacing:0.9px;text-align:center">5,700</div><div class="t" style="left:278px;top:587px;width:86px;font-size:11px;color:#000;letter-spacing:0.9px;text-align:center">14:32:39</div><div class="a" style="left:6px;top:601px;width:360px;height:18px;background:#c6c6c6"></div><div class="a" style="left:6px;top:619px;width:360px;height:1px;background:#3a3a3a"></div><div class="t" style="left:8px;top:606px;width:86px;font-size:11px;color:#000;letter-spacing:0.9px;text-align:center">NQEX</div><div class="t" style="left:98px;top:606px;width:86px;font-size:11px;color:#000;letter-spacing:0.9px;text-align:center">0.78</div><div class="t" style="left:188px;top:606px;width:86px;font-size:11px;color:#000;letter-spacing:0.9px;text-align:center">457</div><div class="t" style="left:278px;top:606px;width:86px;font-size:11px;color:#000;letter-spacing:0.9px;text-align:center">14:32:39</div><div class="a" style="left:6px;top:620px;width:360px;height:18px;background:#c6c6c6"></div><div class="a" style="left:6px;top:638px;width:360px;height:1px;background:#3a3a3a"></div><div class="t" style="left:8px;top:625px;width:86px;font-size:11px;color:#000;letter-spacing:0.9px;text-align:center">EDGX</div><div class="t" style="left:98px;top:625px;width:86px;font-size:11px;color:#000;letter-spacing:0.9px;text-align:center">0.78</div><div class="t" style="left:188px;top:625px;width:86px;font-size:11px;color:#000;letter-spacing:0.9px;text-align:center">77</div><div class="t" style="left:278px;top:625px;width:86px;font-size:11px;color:#000;letter-spacing:0.9px;text-align:center">14:32:39</div><div class="a" style="left:6px;top:639px;width:360px;height:18px;background:#c6c6c6"></div><div class="a" style="left:6px;top:657px;width:360px;height:1px;background:#3a3a3a"></div><div class="t" style="left:8px;top:644px;width:86px;font-size:11px;color:#000;letter-spacing:0.9px;text-align:center">UBSS</div><div class="t" style="left:98px;top:644px;width:86px;font-size:11px;color:#000;letter-spacing:0.9px;text-align:center">0.78</div><div class="t" style="left:188px;top:644px;width:86px;font-size:11px;color:#000;letter-spacing:0.9px;text-align:center">40,000</div><div class="t" style="left:278px;top:644px;width:86px;font-size:11px;color:#000;letter-spacing:0.9px;text-align:center">14:31:46</div><div class="a" style="left:6px;top:658px;width:360px;height:18px;background:#c6c6c6"></div><div class="a" style="left:6px;top:676px;width:360px;height:1px;background:#3a3a3a"></div><div class="t" style="left:8px;top:663px;width:86px;font-size:11px;color:#000;letter-spacing:0.9px;text-align:center">R_63</div><div class="t" style="left:98px;top:663px;width:86px;font-size:11px;color:#000;letter-spacing:0.9px;text-align:center">0.78</div><div class="t" style="left:188px;top:663px;width:86px;font-size:11px;color:#000;letter-spacing:0.9px;text-align:center">1</div><div class="t" style="left:278px;top:663px;width:86px;font-size:11px;color:#000;letter-spacing:0.9px;text-align:center">14:31:46</div><div class="a" style="left:6px;top:677px;width:360px;height:18px;background:#7cb6f0"></div><div class="a" style="left:6px;top:695px;width:360px;height:1px;background:#3a3a3a"></div><div class="t" style="left:8px;top:682px;width:86px;font-size:11px;color:#000;letter-spacing:0.9px;text-align:center">SUSQ</div><div class="t" style="left:98px;top:682px;width:86px;font-size:11px;color:#000;letter-spacing:0.9px;text-align:center">0.7584</div><div class="t" style="left:188px;top:682px;width:86px;font-size:11px;color:#000;letter-spacing:0.9px;text-align:center">100</div><div class="t" style="left:278px;top:682px;width:86px;font-size:11px;color:#000;letter-spacing:0.9px;text-align:center">14:31:00</div><div class="a" style="left:6px;top:696px;width:360px;height:18px;background:#f6b6f6"></div><div class="a" style="left:6px;top:714px;width:360px;height:1px;background:#3a3a3a"></div><div class="t" style="left:8px;top:701px;width:86px;font-size:11px;color:#000;letter-spacing:0.9px;text-align:center">NITE</div><div class="t" style="left:98px;top:701px;width:86px;font-size:11px;color:#000;letter-spacing:0.9px;text-align:center">0.7552</div><div class="t" style="left:188px;top:701px;width:86px;font-size:11px;color:#000;letter-spacing:0.9px;text-align:center">100</div><div class="t" style="left:278px;top:701px;width:86px;font-size:11px;color:#000;letter-spacing:0.9px;text-align:center">11:46:46</div><div class="a" style="left:368px;top:506px;width:13px;height:207px;background:#383838;border-radius:6px"></div><div class="a" style="left:369px;top:508px;width:10px;height:36px;border-radius:5px;background:linear-gradient(90deg,#777,#d8d8d8 45%,#999);border:1px solid #1a1a1a"></div><div class="a" style="left:371px;top:523px;width:6px;height:1px;background:#888"></div><div class="a" style="left:371px;top:525px;width:6px;height:1px;background:#888"></div><div class="a" style="left:371px;top:527px;width:6px;height:1px;background:#888"></div>
<div class="a" style="left:394px;top:484px;width:7px;height:235px;background:linear-gradient(90deg,#2e2e2e,#1e1e1e)"></div>
<div class="a" style="left:401px;top:484px;width:378px;height:231px;background:#000"></div><div class="a" style="left:405px;top:490px;width:86px;height:15px;background:#c0c0c0"></div><div class="t" style="left:405px;top:493px;width:86px;font-size:11px;color:#000;letter-spacing:0.9px;text-align:center">MM ID</div><div class="a" style="left:495px;top:490px;width:86px;height:15px;background:#c0c0c0"></div><div class="t" style="left:495px;top:493px;width:86px;font-size:11px;color:#000;letter-spacing:0.9px;text-align:center">ASK</div><div class="a" style="left:585px;top:490px;width:86px;height:15px;background:#c0c0c0"></div><div class="t" style="left:585px;top:493px;width:86px;font-size:11px;color:#000;letter-spacing:0.9px;text-align:center">Size</div><div class="a" style="left:675px;top:490px;width:86px;height:15px;background:#c0c0c0"></div><div class="t" style="left:675px;top:493px;width:86px;font-size:11px;color:#000;letter-spacing:0.9px;text-align:center">Time</div><div class="a" style="left:403px;top:506px;width:360px;height:18px;background:#f8c898"></div><div class="a" style="left:403px;top:524px;width:360px;height:1px;background:#3a3a3a"></div><div class="t" style="left:405px;top:511px;width:86px;font-size:11px;color:#000;letter-spacing:0.9px;text-align:center">NSDQ</div><div class="t" style="left:495px;top:511px;width:86px;font-size:11px;color:#000;letter-spacing:0.9px;text-align:center">0.7899</div><div class="t" style="left:585px;top:511px;width:86px;font-size:11px;color:#000;letter-spacing:0.9px;text-align:center">100</div><div class="t" style="left:675px;top:511px;width:86px;font-size:11px;color:#000;letter-spacing:0.9px;text-align:center">14:32:39</div><div class="a" style="left:403px;top:525px;width:360px;height:18px;background:#f8c898"></div><div class="a" style="left:403px;top:543px;width:360px;height:1px;background:#3a3a3a"></div><div class="t" style="left:405px;top:530px;width:86px;font-size:11px;color:#000;letter-spacing:0.9px;text-align:center">NQEX</div><div class="t" style="left:495px;top:530px;width:86px;font-size:11px;color:#000;letter-spacing:0.9px;text-align:center">0.7899</div><div class="t" style="left:585px;top:530px;width:86px;font-size:11px;color:#000;letter-spacing:0.9px;text-align:center">1</div><div class="t" style="left:675px;top:530px;width:86px;font-size:11px;color:#000;letter-spacing:0.9px;text-align:center">14:32:39</div><div class="a" style="left:403px;top:544px;width:360px;height:18px;background:#b4f2c6"></div><div class="a" style="left:403px;top:562px;width:360px;height:1px;background:#3a3a3a"></div><div class="t" style="left:405px;top:549px;width:86px;font-size:11px;color:#000;letter-spacing:0.9px;text-align:center">BATS</div><div class="t" style="left:495px;top:549px;width:86px;font-size:11px;color:#000;letter-spacing:0.9px;text-align:center">0.79</div><div class="t" style="left:585px;top:549px;width:86px;font-size:11px;color:#000;letter-spacing:0.9px;text-align:center">1</div><div class="t" style="left:675px;top:549px;width:86px;font-size:11px;color:#000;letter-spacing:0.9px;text-align:center">14:32:39</div><div class="a" style="left:403px;top:563px;width:360px;height:18px;background:#b4f2c6"></div><div class="a" style="left:403px;top:581px;width:360px;height:1px;background:#3a3a3a"></div><div class="t" style="left:405px;top:568px;width:86px;font-size:11px;color:#000;letter-spacing:0.9px;text-align:center">EDGX</div><div class="t" style="left:495px;top:568px;width:86px;font-size:11px;color:#000;letter-spacing:0.9px;text-align:center">0.79</div><div class="t" style="left:585px;top:568px;width:86px;font-size:11px;color:#000;letter-spacing:0.9px;text-align:center">2</div><div class="t" style="left:675px;top:568px;width:86px;font-size:11px;color:#000;letter-spacing:0.9px;text-align:center">14:32:39</div><div class="a" style="left:403px;top:582px;width:360px;height:18px;background:#b4f2c6"></div><div class="a" style="left:403px;top:600px;width:360px;height:1px;background:#3a3a3a"></div><div class="t" style="left:405px;top:587px;width:86px;font-size:11px;color:#000;letter-spacing:0.9px;text-align:center">EGDE</div><div class="t" style="left:495px;top:587px;width:86px;font-size:11px;color:#000;letter-spacing:0.9px;text-align:center">0.79</div><div class="t" style="left:585px;top:587px;width:86px;font-size:11px;color:#000;letter-spacing:0.9px;text-align:center">1</div><div class="t" style="left:675px;top:587px;width:86px;font-size:11px;color:#000;letter-spacing:0.9px;text-align:center">14:32:40</div><div class="a" style="left:403px;top:601px;width:360px;height:18px;background:#b4f2c6"></div><div class="a" style="left:403px;top:619px;width:360px;height:1px;background:#3a3a3a"></div><div class="t" style="left:405px;top:606px;width:86px;font-size:11px;color:#000;letter-spacing:0.9px;text-align:center">PACF</div><div class="t" style="left:495px;top:606px;width:86px;font-size:11px;color:#000;letter-spacing:0.9px;text-align:center">0.79</div><div class="t" style="left:585px;top:606px;width:86px;font-size:11px;color:#000;letter-spacing:0.9px;text-align:center">2</div><div class="t" style="left:675px;top:606px;width:86px;font-size:11px;color:#000;letter-spacing:0.9px;text-align:center">14:32:39</div><div class="a" style="left:403px;top:620px;width:360px;height:18px;background:#c6c6c6"></div><div class="a" style="left:403px;top:638px;width:360px;height:1px;background:#3a3a3a"></div><div class="t" style="left:405px;top:625px;width:86px;font-size:11px;color:#000;letter-spacing:0.9px;text-align:center">CINC</div><div class="t" style="left:495px;top:625px;width:86px;font-size:11px;color:#000;letter-spacing:0.9px;text-align:center">0.797</div><div class="t" style="left:585px;top:625px;width:86px;font-size:11px;color:#000;letter-spacing:0.9px;text-align:center">3</div><div class="t" style="left:675px;top:625px;width:86px;font-size:11px;color:#000;letter-spacing:0.9px;text-align:center">14:32:35</div><div class="a" style="left:403px;top:639px;width:360px;height:18px;background:#7cb6f0"></div><div class="a" style="left:403px;top:657px;width:360px;height:1px;background:#3a3a3a"></div><div class="t" style="left:405px;top:644px;width:86px;font-size:11px;color:#000;letter-spacing:0.9px;text-align:center">R_63</div><div class="t" style="left:495px;top:644px;width:86px;font-size:11px;color:#000;letter-spacing:0.9px;text-align:center">0.80</div><div class="t" style="left:585px;top:644px;width:86px;font-size:11px;color:#000;letter-spacing:0.9px;text-align:center">1</div><div class="t" style="left:675px;top:644px;width:86px;font-size:11px;color:#000;letter-spacing:0.9px;text-align:center">14:31:46</div><div class="a" style="left:403px;top:658px;width:360px;height:18px;background:#f6b6f6"></div><div class="a" style="left:403px;top:676px;width:360px;height:1px;background:#3a3a3a"></div><div class="t" style="left:405px;top:663px;width:86px;font-size:11px;color:#000;letter-spacing:0.9px;text-align:center">SUFI</div><div class="t" style="left:495px;top:663px;width:86px;font-size:11px;color:#000;letter-spacing:0.9px;text-align:center">0.8215</div><div class="t" style="left:585px;top:663px;width:86px;font-size:11px;color:#000;letter-spacing:0.9px;text-align:center">100</div><div class="t" style="left:675px;top:663px;width:86px;font-size:11px;color:#000;letter-spacing:0.9px;text-align:center">14:32:01</div><div class="a" style="left:403px;top:677px;width:360px;height:18px;background:#f6b6f6"></div><div class="a" style="left:403px;top:695px;width:360px;height:1px;background:#3a3a3a"></div><div class="t" style="left:405px;top:682px;width:86px;font-size:11px;color:#000;letter-spacing:0.9px;text-align:center">SUSQ</div><div class="t" style="left:495px;top:682px;width:86px;font-size:11px;color:#000;letter-spacing:0.9px;text-align:center">0.8218</div><div class="t" style="left:585px;top:682px;width:86px;font-size:11px;color:#000;letter-spacing:0.9px;text-align:center">100</div><div class="t" style="left:675px;top:682px;width:86px;font-size:11px;color:#000;letter-spacing:0.9px;text-align:center">14:31:00</div><div class="a" style="left:403px;top:696px;width:360px;height:18px;background:#f6b6f6"></div><div class="a" style="left:403px;top:714px;width:360px;height:1px;background:#3a3a3a"></div><div class="t" style="left:405px;top:701px;width:86px;font-size:11px;color:#000;letter-spacing:0.9px;text-align:center">UBSS</div><div class="t" style="left:495px;top:701px;width:86px;font-size:11px;color:#000;letter-spacing:0.9px;text-align:center">0.84</div><div class="t" style="left:585px;top:701px;width:86px;font-size:11px;color:#000;letter-spacing:0.9px;text-align:center">3,600</div><div class="t" style="left:675px;top:701px;width:86px;font-size:11px;color:#000;letter-spacing:0.9px;text-align:center">14:31:46</div><div class="a" style="left:765px;top:506px;width:13px;height:207px;background:#383838;border-radius:6px"></div><div class="a" style="left:766px;top:508px;width:10px;height:36px;border-radius:5px;background:linear-gradient(90deg,#777,#d8d8d8 45%,#999);border:1px solid #1a1a1a"></div><div class="a" style="left:768px;top:523px;width:6px;height:1px;background:#888"></div><div class="a" style="left:768px;top:525px;width:6px;height:1px;background:#888"></div><div class="a" style="left:768px;top:527px;width:6px;height:1px;background:#888"></div>
<div class="a" style="left:784px;top:480px;width:1px;height:239px;background:#3a3a3a"></div>
<div class="a" style="left:786px;top:62px;width:242px;height:657px;background:#2e2e2e"></div>
<div class="a" style="left:788px;top:49px;width:0;height:0;border-left:6px solid transparent;border-right:6px solid transparent;border-top:6px solid #f2b800"></div>
<div class="t" style="left:805px;top:46px;font-size:10.8px;color:#e6e6e6">Level 1</div>
<div class="a" style="left:873px;top:42px;width:14px;height:14px;border:1px solid #1e1e1e;border-radius:2px;background:#383838"></div>
<div class="t" style="left:893px;top:43px;font-size:11px;color:#dcdcdc">Prev Day</div>
<div class="a" style="left:785px;top:62px;width:238px;height:19px;background:#1f3f5a"></div>
<div class="t" style="left:796px;top:68px;font-size:11px;letter-spacing:1px;color:#8a9cab">Volume:</div>
<div class="t" style="left:904px;top:68px;font-size:11px;letter-spacing:1px;color:#fff">4,617,598</div>
<div class="a" style="left:785px;top:81px;width:238px;height:19px;background:#011a3c"></div>
<div class="t" style="left:796px;top:87px;font-size:11px;letter-spacing:1px;color:#8a9cab">$ Volume:</div>
<div class="t" style="left:904px;top:87px;font-size:11px;letter-spacing:1px;color:#fff">3,605,726</div>
<div class="a" style="left:785px;top:100px;width:238px;height:19px;background:#1f3f5a"></div>
<div class="t" style="left:796px;top:106px;font-size:11px;letter-spacing:1px;color:#8a9cab">Trades:</div>
<div class="t" style="left:904px;top:106px;font-size:11px;letter-spacing:1px;color:#fff">5,912</div>
<div class="a" style="left:785px;top:119px;width:238px;height:19px;background:#011a3c"></div>
<div class="t" style="left:796px;top:125px;font-size:11px;letter-spacing:1px;color:#8a9cab"></div>
<div class="t" style="left:904px;top:125px;font-size:11px;letter-spacing:1px;color:#fff"></div>
<div class="a" style="left:785px;top:138px;width:238px;height:19px;background:#1f3f5a"></div>
<div class="t" style="left:791px;top:144px;font-size:11px;letter-spacing:1px;color:#8a9cab">Last:</div>
<div class="t" style="left:834px;top:144px;font-size:11px;letter-spacing:1px;color:#10ff10">0.7828</div>
<div class="t" style="left:905px;top:144px;font-size:11px;letter-spacing:1px;color:#8a9cab">Close:</div>
<div class="t" style="left:953px;top:144px;font-size:11px;letter-spacing:1px;color:#fff">0.6564</div>
<div class="a" style="left:785px;top:157px;width:238px;height:19px;background:#011a3c"></div>
<div class="t" style="left:791px;top:163px;font-size:11px;letter-spacing:1px;color:#8a9cab">Bid:</div>
<div class="t" style="left:834px;top:163px;font-size:11px;letter-spacing:1px;color:#fff">0.7828</div>
<div class="t" style="left:905px;top:163px;font-size:11px;letter-spacing:1px;color:#8a9cab">Net:</div>
<div class="t" style="left:953px;top:163px;font-size:11px;letter-spacing:1px;color:#10ff10">0.1264</div>
<div class="a" style="left:785px;top:176px;width:238px;height:19px;background:#1f3f5a"></div>
<div class="t" style="left:791px;top:182px;font-size:11px;letter-spacing:1px;color:#8a9cab">Ask:</div>
<div class="t" style="left:834px;top:182px;font-size:11px;letter-spacing:1px;color:#fff">0.7899</div>
<div class="t" style="left:905px;top:182px;font-size:11px;letter-spacing:1px;color:#8a9cab">%Chg:</div>
<div class="t" style="left:953px;top:182px;font-size:11px;letter-spacing:1px;color:#10ff10">19.26</div>
<div class="a" style="left:785px;top:195px;width:238px;height:19px;background:#011a3c"></div>
<div class="t" style="left:791px;top:201px;font-size:11px;letter-spacing:1px;color:#8a9cab">Open:</div>
<div class="t" style="left:834px;top:201px;font-size:11px;letter-spacing:1px;color:#fff">0.71</div>
<div class="t" style="left:905px;top:201px;font-size:11px;letter-spacing:1px;color:#8a9cab"></div>
<div class="t" style="left:953px;top:201px;font-size:11px;letter-spacing:1px;color:#fff"></div>
<div class="a" style="left:785px;top:214px;width:238px;height:19px;background:#1f3f5a"></div>
<div class="t" style="left:791px;top:220px;font-size:11px;letter-spacing:1px;color:#8a9cab">High:</div>
<div class="t" style="left:834px;top:220px;font-size:11px;letter-spacing:1px;color:#fff">0.8585</div>
<div class="t" style="left:905px;top:220px;font-size:11px;letter-spacing:1px;color:#8a9cab">52 H:</div>
<div class="t" style="left:953px;top:220px;font-size:11px;letter-spacing:1px;color:#fff">10.975</div>
<div class="a" style="left:785px;top:233px;width:238px;height:19px;background:#011a3c"></div>
<div class="t" style="left:791px;top:239px;font-size:11px;letter-spacing:1px;color:#8a9cab">Low:</div>
<div class="t" style="left:834px;top:239px;font-size:11px;letter-spacing:1px;color:#fff">0.68</div>
<div class="t" style="left:905px;top:239px;font-size:11px;letter-spacing:1px;color:#8a9cab">52 L:</div>
<div class="t" style="left:953px;top:239px;font-size:11px;letter-spacing:1px;color:#fff">0.55</div>
<div class="a" style="left:1021px;top:252px;width:2px;height:467px;background:#2e2e2e"></div>
<div class="a" style="left:1023px;top:59px;width:5px;height:491px;background:#111;border-left:2px solid #3a3a3a;border-top:1px solid #3a3a3a;border-right:1px solid #333"></div>
<div class="a" style="left:1023px;top:550px;width:5px;height:30px;background:#2a2a2a;border-top:1px solid #222"></div>
<div class="a" style="left:1025px;top:557px;width:3px;height:16px;background:#6e7c80"></div>
<div class="a" style="left:1023px;top:580px;width:5px;height:1px;background:#b04a20"></div>
<div class="a" style="left:1023px;top:581px;width:5px;height:138px;background:#000"></div>
<div class="a" style="left:795px;top:260px;width:43px;height:22px;border-radius:3px;background:linear-gradient(#5a5a5a,#3c3c3c 45%,#262626 47%,#222);border:1px solid #1a1a1a"></div>
<div class="a" style="left:811px;top:268px;width:0;height:0;border-left:5px solid transparent;border-right:5px solid transparent;border-top:6px solid #f2b800"></div>
<div class="t" style="left:848px;top:265px;font-size:11px;letter-spacing:-0.5px;color:#e0e0e0">Time &amp; Sales</div>
<div class="a" style="left:918px;top:260px;width:54px;height:22px;border-radius:3px;background:linear-gradient(#5a5a5a,#3c3c3c 45%,#262626 47%,#222);border:1px solid #1a1a1a"></div>
<div class="t" style="left:932px;top:265px;font-size:11px;color:#e0e0e0">More</div>
<div class="a" style="left:787px;top:284px;width:234px;height:435px;background:#000"></div>
<div class="a" style="left:789px;top:288px;width:216px;height:30px;background:#c2c2c2"></div>
<div class="t" style="left:811px;top:299px;font-size:11.5px;color:#000;letter-spacing:0.5px">Time</div>
<div class="t" style="left:884px;top:299px;font-size:11.5px;color:#000;letter-spacing:0.5px">Price</div>
<div class="t" style="left:951px;top:299px;font-size:11.5px;color:#000;letter-spacing:0.5px">Shares</div>
<div class="a" style="left:789px;top:318px;width:216px;height:19px;background:#1f3f5a"></div>
<div class="t" style="left:799px;top:323px;font-size:11px;letter-spacing:1.1px;color:#fff">14:32:34</div>
<div class="t" style="left:861px;top:323px;width:86px;text-align:center;font-size:11px;letter-spacing:1.1px;color:#fff"><span style="position:relative">0.7828</span></div>
<div class="t" style="left:938px;top:323px;width:66px;text-align:center;font-size:11px;letter-spacing:1.1px;color:#fff">163</div>
<div class="a" style="left:789px;top:338px;width:216px;height:19px;background:#011a3c"></div>
<div class="t" style="left:799px;top:343px;font-size:11px;letter-spacing:1.1px;color:#fff">14:32:34</div>
<div class="t" style="left:861px;top:343px;width:86px;text-align:center;font-size:11px;letter-spacing:1.1px;color:#10ff10"><span style="position:relative"><svg style="position:absolute;left:-11px;top:1px" width="7" height="8"><path d="M3.5 0.5L6.5 4H4.5V7.5H2.5V4H0.5Z" fill="#10ff10"/></svg>0.7828</span></div>
<div class="t" style="left:938px;top:343px;width:66px;text-align:center;font-size:11px;letter-spacing:1.1px;color:#fff">100</div>
<div class="a" style="left:789px;top:358px;width:216px;height:19px;background:#1f3f5a"></div>
<div class="t" style="left:799px;top:363px;font-size:11px;letter-spacing:1.1px;color:#fff">14:32:02</div>
<div class="t" style="left:861px;top:363px;width:86px;text-align:center;font-size:11px;letter-spacing:1.1px;color:#ff1a1a"><span style="position:relative"><svg style="position:absolute;left:-11px;top:1px" width="7" height="8"><path d="M3.5 7.5L6.5 4H4.5V0.5H2.5V4H0.5Z" fill="#ff1a1a"/></svg>0.7818</span></div>
<div class="t" style="left:938px;top:363px;width:66px;text-align:center;font-size:11px;letter-spacing:1.1px;color:#fff">500</div>
<div class="a" style="left:789px;top:378px;width:216px;height:19px;background:#011a3c"></div>
<div class="t" style="left:799px;top:383px;font-size:11px;letter-spacing:1.1px;color:#fff">14:32:01</div>
<div class="t" style="left:861px;top:383px;width:86px;text-align:center;font-size:11px;letter-spacing:1.1px;color:#ff1a1a"><span style="position:relative"><svg style="position:absolute;left:-11px;top:1px" width="7" height="8"><path d="M3.5 7.5L6.5 4H4.5V0.5H2.5V4H0.5Z" fill="#ff1a1a"/></svg>0.7827</span></div>
<div class="t" style="left:938px;top:383px;width:66px;text-align:center;font-size:11px;letter-spacing:1.1px;color:#fff">600</div>
<div class="a" style="left:789px;top:398px;width:216px;height:19px;background:#1f3f5a"></div>
<div class="t" style="left:799px;top:403px;font-size:11px;letter-spacing:1.1px;color:#fff">14:32:01</div>
<div class="t" style="left:861px;top:403px;width:86px;text-align:center;font-size:11px;letter-spacing:1.1px;color:#10ff10"><span style="position:relative"><svg style="position:absolute;left:-11px;top:1px" width="7" height="8"><path d="M3.5 0.5L6.5 4H4.5V7.5H2.5V4H0.5Z" fill="#10ff10"/></svg>0.7828</span></div>
<div class="t" style="left:938px;top:403px;width:66px;text-align:center;font-size:11px;letter-spacing:1.1px;color:#fff">700</div>
<div class="a" style="left:789px;top:418px;width:216px;height:19px;background:#011a3c"></div>
<div class="t" style="left:799px;top:423px;font-size:11px;letter-spacing:1.1px;color:#fff">14:32:00</div>
<div class="t" style="left:861px;top:423px;width:86px;text-align:center;font-size:11px;letter-spacing:1.1px;color:#ff1a1a"><span style="position:relative"><svg style="position:absolute;left:-11px;top:1px" width="7" height="8"><path d="M3.5 7.5L6.5 4H4.5V0.5H2.5V4H0.5Z" fill="#ff1a1a"/></svg>0.7827</span></div>
<div class="t" style="left:938px;top:423px;width:66px;text-align:center;font-size:11px;letter-spacing:1.1px;color:#fff">100</div>
<div class="a" style="left:789px;top:438px;width:216px;height:19px;background:#1f3f5a"></div>
<div class="t" style="left:799px;top:443px;font-size:11px;letter-spacing:1.1px;color:#fff">14:32:00</div>
<div class="t" style="left:861px;top:443px;width:86px;text-align:center;font-size:11px;letter-spacing:1.1px;color:#fff"><span style="position:relative">0.79</span></div>
<div class="t" style="left:938px;top:443px;width:66px;text-align:center;font-size:11px;letter-spacing:1.1px;color:#fff">100</div>
<div class="a" style="left:789px;top:458px;width:216px;height:19px;background:#011a3c"></div>
<div class="t" style="left:799px;top:463px;font-size:11px;letter-spacing:1.1px;color:#fff">14:32:00</div>
<div class="t" style="left:861px;top:463px;width:86px;text-align:center;font-size:11px;letter-spacing:1.1px;color:#fff"><span style="position:relative">0.79</span></div>
<div class="t" style="left:938px;top:463px;width:66px;text-align:center;font-size:11px;letter-spacing:1.1px;color:#fff">1,081</div>
<div class="a" style="left:789px;top:478px;width:216px;height:19px;background:#1f3f5a"></div>
<div class="t" style="left:799px;top:483px;font-size:11px;letter-spacing:1.1px;color:#fff">14:32:00</div>
<div class="t" style="left:861px;top:483px;width:86px;text-align:center;font-size:11px;letter-spacing:1.1px;color:#fff"><span style="position:relative">0.79</span></div>
<div class="t" style="left:938px;top:483px;width:66px;text-align:center;font-size:11px;letter-spacing:1.1px;color:#fff">100</div>
<div class="a" style="left:789px;top:498px;width:216px;height:19px;background:#011a3c"></div>
<div class="t" style="left:799px;top:503px;font-size:11px;letter-spacing:1.1px;color:#fff">14:32:00</div>
<div class="t" style="left:861px;top:503px;width:86px;text-align:center;font-size:11px;letter-spacing:1.1px;color:#fff"><span style="position:relative">0.79</span></div>
<div class="t" style="left:938px;top:503px;width:66px;text-align:center;font-size:11px;letter-spacing:1.1px;color:#fff">100</div>
<div class="a" style="left:789px;top:518px;width:216px;height:19px;background:#1f3f5a"></div>
<div class="t" style="left:799px;top:523px;font-size:11px;letter-spacing:1.1px;color:#fff">14:31:59</div>
<div class="t" style="left:861px;top:523px;width:86px;text-align:center;font-size:11px;letter-spacing:1.1px;color:#fff"><span style="position:relative">0.79</span></div>
<div class="t" style="left:938px;top:523px;width:66px;text-align:center;font-size:11px;letter-spacing:1.1px;color:#fff">100</div>
<div class="a" style="left:789px;top:538px;width:216px;height:19px;background:#011a3c"></div>
<div class="t" style="left:799px;top:543px;font-size:11px;letter-spacing:1.1px;color:#fff">14:31:59</div>
<div class="t" style="left:861px;top:543px;width:86px;text-align:center;font-size:11px;letter-spacing:1.1px;color:#ff1a1a"><span style="position:relative"><svg style="position:absolute;left:-11px;top:1px" width="7" height="8"><path d="M3.5 7.5L6.5 4H4.5V0.5H2.5V4H0.5Z" fill="#ff1a1a"/></svg>0.79</span></div>
<div class="t" style="left:938px;top:543px;width:66px;text-align:center;font-size:11px;letter-spacing:1.1px;color:#fff">100</div>
<div class="a" style="left:789px;top:558px;width:216px;height:19px;background:#1f3f5a"></div>
<div class="t" style="left:799px;top:563px;font-size:11px;letter-spacing:1.1px;color:#fff">14:31:59</div>
<div class="t" style="left:861px;top:563px;width:86px;text-align:center;font-size:11px;letter-spacing:1.1px;color:#fff"><span style="position:relative">0.7901</span></div>
<div class="t" style="left:938px;top:563px;width:66px;text-align:center;font-size:11px;letter-spacing:1.1px;color:#fff">3,300</div>
<div class="a" style="left:789px;top:578px;width:216px;height:19px;background:#011a3c"></div>
<div class="t" style="left:799px;top:583px;font-size:11px;letter-spacing:1.1px;color:#fff">14:31:55</div>
<div class="t" style="left:861px;top:583px;width:86px;text-align:center;font-size:11px;letter-spacing:1.1px;color:#ff1a1a"><span style="position:relative"><svg style="position:absolute;left:-11px;top:1px" width="7" height="8"><path d="M3.5 7.5L6.5 4H4.5V0.5H2.5V4H0.5Z" fill="#ff1a1a"/></svg>0.7901</span></div>
<div class="t" style="left:938px;top:583px;width:66px;text-align:center;font-size:11px;letter-spacing:1.1px;color:#fff">100</div>
<div class="a" style="left:789px;top:598px;width:216px;height:19px;background:#1f3f5a"></div>
<div class="t" style="left:799px;top:603px;font-size:11px;letter-spacing:1.1px;color:#fff">14:31:52</div>
<div class="t" style="left:861px;top:603px;width:86px;text-align:center;font-size:11px;letter-spacing:1.1px;color:#10ff10"><span style="position:relative"><svg style="position:absolute;left:-11px;top:1px" width="7" height="8"><path d="M3.5 0.5L6.5 4H4.5V7.5H2.5V4H0.5Z" fill="#10ff10"/></svg>0.7945</span></div>
<div class="t" style="left:938px;top:603px;width:66px;text-align:center;font-size:11px;letter-spacing:1.1px;color:#fff">1,000</div>
<div class="a" style="left:789px;top:618px;width:216px;height:19px;background:#011a3c"></div>
<div class="t" style="left:799px;top:623px;font-size:11px;letter-spacing:1.1px;color:#fff">14:31:52</div>
<div class="t" style="left:861px;top:623px;width:86px;text-align:center;font-size:11px;letter-spacing:1.1px;color:#ff1a1a"><span style="position:relative"><svg style="position:absolute;left:-11px;top:1px" width="7" height="8"><path d="M3.5 7.5L6.5 4H4.5V0.5H2.5V4H0.5Z" fill="#ff1a1a"/></svg>0.7901</span></div>
<div class="t" style="left:938px;top:623px;width:66px;text-align:center;font-size:11px;letter-spacing:1.1px;color:#fff">1,600</div>
<div class="a" style="left:789px;top:638px;width:216px;height:19px;background:#1f3f5a"></div>
<div class="t" style="left:799px;top:643px;font-size:11px;letter-spacing:1.1px;color:#fff">14:31:51</div>
<div class="t" style="left:861px;top:643px;width:86px;text-align:center;font-size:11px;letter-spacing:1.1px;color:#ff1a1a"><span style="position:relative"><svg style="position:absolute;left:-11px;top:1px" width="7" height="8"><path d="M3.5 7.5L6.5 4H4.5V0.5H2.5V4H0.5Z" fill="#ff1a1a"/></svg>0.794</span></div>
<div class="t" style="left:938px;top:643px;width:66px;text-align:center;font-size:11px;letter-spacing:1.1px;color:#fff">500</div>
<div class="a" style="left:1007px;top:318px;width:12px;height:401px;background:#383838;border-radius:6px 6px 0 0"></div>
<div class="a" style="left:1008px;top:319px;width:11px;height:76px;border-radius:6px;background:linear-gradient(90deg,#777,#d8d8d8 45%,#999);border:1px solid #1a1a1a"></div>
<div class="a" style="left:1011px;top:355px;width:6px;height:1px;background:#888"></div>
<div class="a" style="left:1011px;top:357px;width:6px;height:1px;background:#888"></div>
<div class="a" style="left:1011px;top:359px;width:6px;height:1px;background:#888"></div>
<div class="a" style="left:742px;top:648px;width:282px;height:76px;border:2px solid #d2d2d2;border-right:none;border-bottom:none;border-top-left-radius:7px;background:linear-gradient(#3e3e3e,#2e2e2e)"></div>
<div class="t" style="left:755px;top:658px;font-size:11.5px;font-weight:bold;color:#f0f0f0;letter-spacing:0.3px">Message</div>
<svg class="a" style="left:1006px;top:657px" width="14" height="12"><path d="M2 1l9 10M11 1l-9 10" stroke="#bbb" stroke-width="1.8"/></svg>
<svg class="a" style="left:757px;top:680px" width="36" height="36"><defs><linearGradient id="ig" x1="0" y1="0" x2="0" y2="1"><stop offset="0" stop-color="#5a8ae0"/><stop offset="0.5" stop-color="#2a5cc8"/><stop offset="1" stop-color="#0a60e0"/></linearGradient></defs><circle cx="18" cy="18" r="15.5" fill="url(#ig)" stroke="#d8dde4" stroke-width="1.6"/><path d="M4 17 Q18 10 32 12 A14 14 0 0 0 4 17Z" fill="#7aa2ea" opacity="0.45"/><circle cx="18.5" cy="10" r="2.4" fill="#fff"/><path d="M15 14h5v11h2.5v2.5h-8V25h2.5v-8.5h-2z" fill="#fff"/></svg>
<div class="t" style="left:812px;top:693px;font-size:11px;color:#e0e0e0">You are not logged in your trading account.</div>
</body></html>
